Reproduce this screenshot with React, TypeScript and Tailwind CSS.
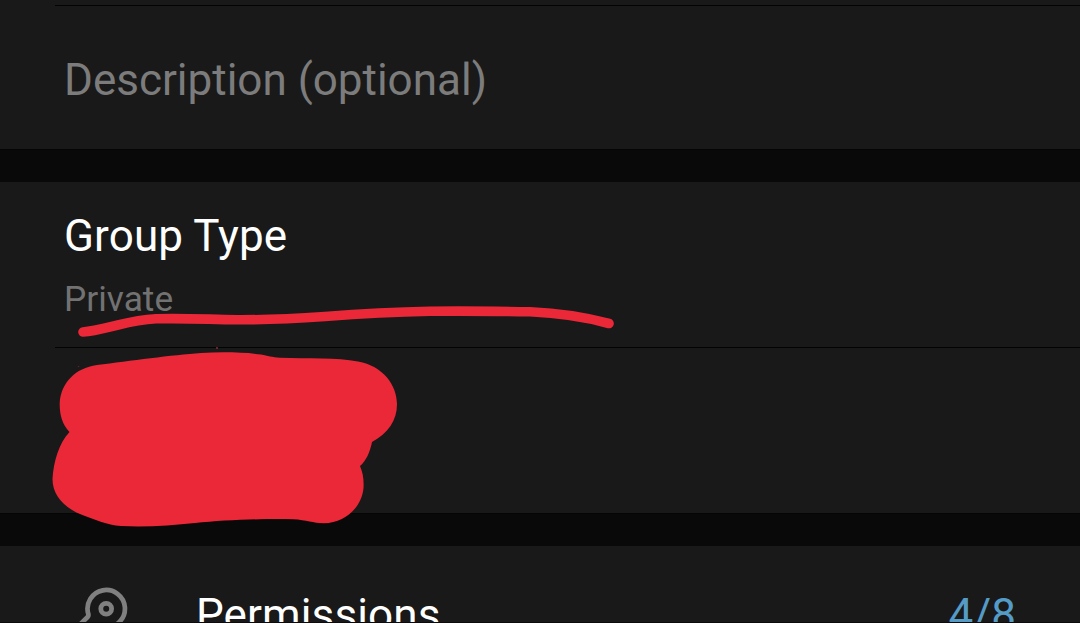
function Divider() {
  return <div className="ml-[55px] h-px shrink-0 bg-[#030303]" />;
}

function SectionGap() {
  return <div className="h-[33px] shrink-0 border-t border-[#050505] bg-[#090909]" />;
}

function KeyIcon() {
  return (
    <svg className="h-[62px] w-[62px] shrink-0" viewBox="70 580 62 62" fill="none" stroke="#808080">
      <path
        d="M74 630.5 L87.6 617 Q88.8 615.8 88.3 614 A18.7 18.7 0 1 1 106 627.4 Q101 627.5 97.5 625.5"
        strokeWidth="4.7"
        strokeLinejoin="round"
      />
      <circle cx="106.2" cy="608.7" r="5.4" strokeWidth="4.8" />
    </svg>
  );
}

function Scribbles() {
  return (
    <svg
      className="pointer-events-none absolute left-0 top-0 h-[623px] w-[1080px]"
      viewBox="0 0 1080 623"
      fill="none"
    >
      <path
        d="M83 332 C94 331 105 328 118 325 C130 322 143 319.5 156 318.8 C185 318 205 319.3 237 319.8 C269 320 295 318.5 325 316.5 C357 314 390 312 430 311.3 C465 310.8 500 311.3 530 311.8 C558 313 583 316.5 609 323.5"
        stroke="#ea2838"
        strokeWidth="9.6"
        strokeLinecap="round"
        strokeLinejoin="round"
      />
      <path
        d="M97 365 C130 361 172 355 201 353 C222 351.8 245 352.3 261 354.5 C268 355.6 272 357.4 280 357.7 C308 358.6 337 357.4 358 361.5 C383 366 397 385 397 404 C397 421 388 433 372 442 C370 452 366 461 360 466 C363 473 364 480 363.5 488 C362 507 345 523 324 523.2 C313 523.3 307 520 293 519.3 C263 518.5 225 520 195 523 C172 525.5 145 527.3 121 526 C106 524.8 96 520 85 516 C65 509 52.5 496 52.5 479 C53.5 462 59 443 69.5 432 C62 424 59.5 414 59.7 403 C61 383 75 368 97 365 Z"
        fill="#ea2838"
      />
      <circle cx="217" cy="348" r="1" fill="#8f2831" />
      <circle cx="78.5" cy="366.5" r="0.8" fill="#54242a" />
    </svg>
  );
}

export default function App() {
  return (
    <main className="relative flex h-[623px] w-[1080px] flex-col overflow-hidden bg-[#191919] font-['Roboto',sans-serif]">
      <section className="flex h-[149px] shrink-0 flex-col pt-[5px]">
        <Divider />
        <div className="pl-[64px] pt-[48px] text-[44px] leading-[52px] text-[#7c7c7c]">
          Description (optional)
        </div>
      </section>
      <SectionGap />
      <section className="flex h-[331px] shrink-0 flex-col">
        <div className="flex h-[165px] shrink-0 flex-col pl-[64px] pt-[28px]">
          <div className="text-[44px] leading-[52px] tracking-[0.12px] text-white">Group Type</div>
          <div className="mt-[15px] text-[35.3px] leading-[44px] text-[#727272]">Private</div>
        </div>
        <Divider />
      </section>
      <SectionGap />
      <section className="flex h-[77px] shrink-0 items-start overflow-hidden border-b border-[#0c0a0a] pl-[70px] pr-[64px] pt-[34px]">
        <KeyIcon />
        <div className="ml-[64px] mt-[9px] flex grow justify-between text-[44px] leading-[52px]">
          <span className="tracking-[0.12px] text-white">Permissions</span>
          <span className="text-[#559bc7]">4/8</span>
        </div>
      </section>
      <Scribbles />
    </main>
  );
}
